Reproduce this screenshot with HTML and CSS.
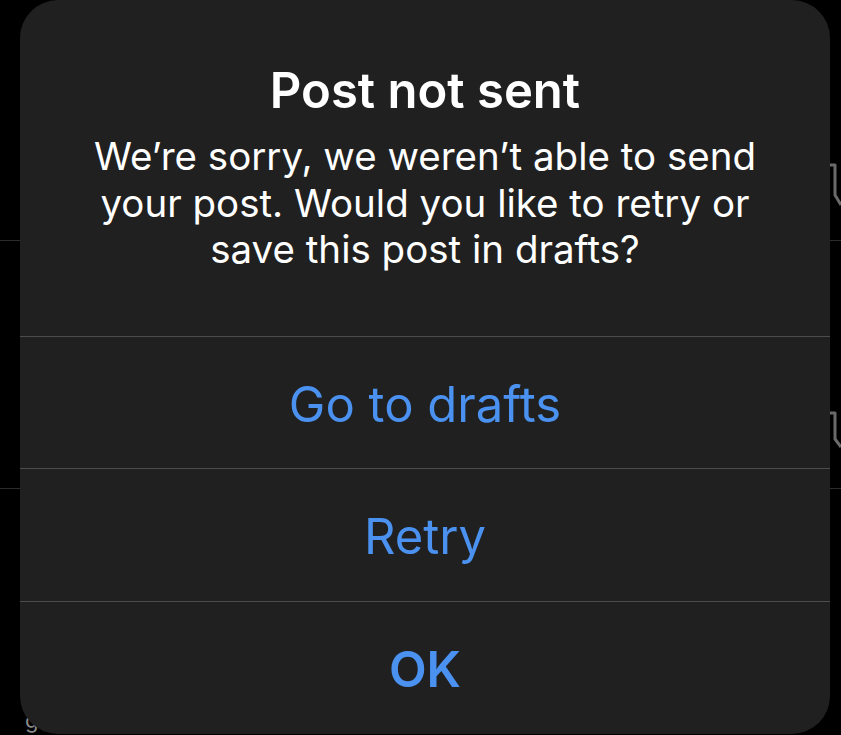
FILE: index.html
```html
<!DOCTYPE html>
<html>
<head>
<meta charset="utf-8">
<link rel="stylesheet" href="styles.css">
</head>
<body>
<div class="screen">
  <div class="feed">
    <div class="feed-row row-one">
      <svg class="side-icon" width="20" height="50" viewBox="0 0 20 50"><path d="M6 4 H14 V34 L20 44" fill="none" stroke="#6a6a6a" stroke-width="3" stroke-linejoin="round"/></svg>
    </div>
    <div class="feed-row row-two">
      <svg class="side-icon" width="20" height="44" viewBox="0 0 20 44"><path d="M6 4 H14 V30 L20 38" fill="none" stroke="#6a6a6a" stroke-width="3" stroke-linejoin="round"/></svg>
    </div>
    <div class="feed-row row-three">
      <span class="corner-glyph">g</span>
    </div>
  </div>

  <div class="alert">
    <div class="alert-head">
      <h1 class="alert-title">Post not sent</h1>
      <p class="alert-msg">We’re sorry, we weren’t able to send<br>your post. Would you like to retry or<br>save this post in drafts?</p>
    </div>
    <div class="alert-btn">Go to drafts</div>
    <div class="alert-btn">Retry</div>
    <div class="alert-btn alert-btn-bold">OK</div>
  </div>
</div>
</body>
</html>
```
FILE: styles.css
```css
html, body {
  margin: 0;
  padding: 0;
  background: #000;
}
body {
  width: 841px;
  height: 735px;
  overflow: hidden;
  font-family: Inter, "Noto Sans", "Liberation Sans", sans-serif;
}
.screen {
  position: relative;
  width: 841px;
  height: 735px;
}
.feed {
  display: flex;
  flex-direction: column;
}
.feed-row {
  position: relative;
  border-bottom: 1px solid #2c2c2c;
}
.row-one { height: 240px; }
.row-two { height: 247px; }
.row-three { height: 246px; border-bottom: none; }
.side-icon {
  position: absolute;
  right: 0;
}
.row-one .side-icon { top: 161px; }
.row-two .side-icon { top: 168px; }
.corner-glyph {
  position: absolute;
  left: 25px;
  top: 218px;
  color: #8a8a8a;
  font-size: 22px;
}
.alert {
  position: absolute;
  left: 20px;
  top: 0;
  width: 810px;
  height: 734px;
  background: #202020;
  border-radius: 38px;
  display: flex;
  flex-direction: column;
  overflow: hidden;
}
.alert-head {
  height: 337px;
  box-sizing: border-box;
  padding: 62px 20px 0;
  text-align: center;
  border-bottom: 1px solid #4c4c4c;
}
.alert-title {
  margin: 0;
  color: #fff;
  font-size: 49px;
  font-weight: 600;
  line-height: 58px;
}
.alert-msg {
  margin: 13px 0 0;
  color: #fff;
  font-size: 38.5px;
  font-weight: 400;
  line-height: 46.5px;
  white-space: nowrap;
}
.alert-btn {
  height: 132px;
  box-sizing: border-box;
  padding-top: 3px;
  display: flex;
  align-items: center;
  justify-content: center;
  color: #4a91f0;
  font-size: 49px;
  border-bottom: 1px solid #4c4c4c;
}
.alert-btn:nth-child(3) {
  height: 133px;
}
.alert-btn:last-child {
  border-bottom: none;
}
.alert-btn-bold {
  font-weight: 600;
}
```
